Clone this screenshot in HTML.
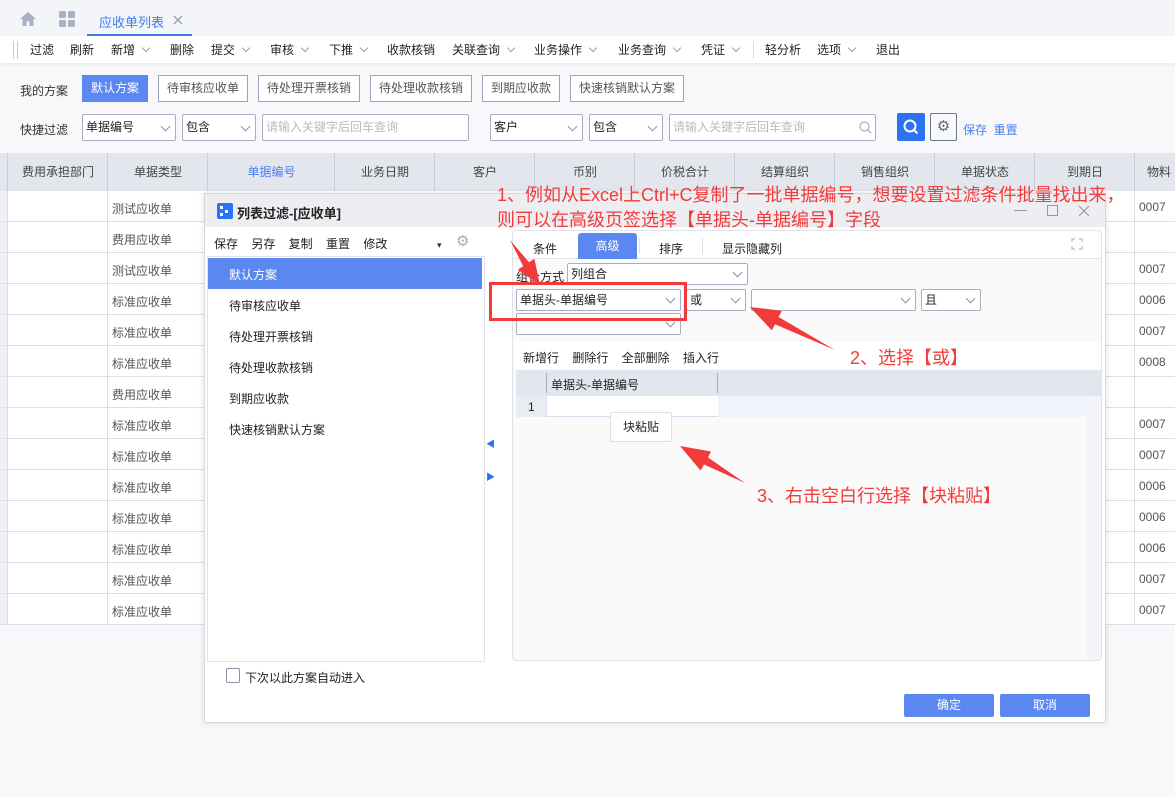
<!DOCTYPE html>
<html><head><meta charset="utf-8"><style>
*{margin:0;padding:0;box-sizing:border-box}
body{width:1175px;height:797px;position:relative;overflow:hidden;background:#f8f8fa;font-family:"Liberation Sans","Noto Sans CJK SC",sans-serif;font-size:12px;color:#222}
.a{position:absolute;white-space:nowrap}
.tb{position:absolute;top:41px;font-size:12px;color:#222;white-space:nowrap}
.tb i{display:inline-block;width:6px;height:6px;border-right:1px solid #9aa2b4;border-bottom:1px solid #9aa2b4;transform:rotate(45deg);margin-left:8px;position:relative;top:-3px}
.btn{position:absolute;top:75px;height:27px;border:1px solid #9aa5bd;background:#fff;color:#555;font-size:12px;line-height:25px;text-align:center}
.sel{position:absolute;height:27px;border:1px solid #a7b0c2;background:#fff;border-radius:2px;font-size:12px;line-height:25px;padding-left:3px}
.chev{position:absolute;right:6px;top:8px;width:7px;height:7px;border-right:1px solid #8a93a6;border-bottom:1px solid #8a93a6;transform:rotate(45deg)}
.s2{position:absolute;height:22px;border:1px solid #a7b0c2;background:#fff;border-radius:2px;font-size:12px;line-height:20px;padding-left:3px}
.s2 .chev{top:5px}
.hd{position:absolute;top:153px;height:38px;line-height:38px;text-align:center;color:#444;font-size:12px;border-left:1px solid #c9cdd6}
.red{color:#f43b3b;font-size:18px}
</style></head><body>
<!-- top tabs -->
<div class="a" style="left:0;top:0;width:1175px;height:36px;background:#f4f5f8"></div>
<svg class="a" style="left:19px;top:11px" width="18" height="16" viewBox="0 0 18 16"><path d="M9 1 L1 8 H3.5 V15 H7.5 V10.5 H10.5 V15 H14.5 V8 H17 Z" fill="#a9b1c2"/></svg>
<svg class="a" style="left:59px;top:11px" width="16" height="16"><rect x="0" y="0" width="7" height="7" rx="1.5" fill="#a9b1c2"/><rect x="9" y="0" width="7" height="7" rx="1.5" fill="#a9b1c2"/><rect x="0" y="9" width="7" height="7" rx="1.5" fill="#a9b1c2"/><rect x="9" y="9" width="7" height="7" rx="1.5" fill="#a9b1c2"/></svg>
<div class="a" style="left:99px;top:12px;font-size:13px;color:#3d7bf4">应收单列表</div>
<svg class="a" style="left:173px;top:15px" width="10" height="10"><path d="M1 1L9 9M9 1L1 9" stroke="#9aa0ad" stroke-width="1.4"/></svg>
<div class="a" style="left:87px;top:34px;width:105px;height:2px;background:#3d7bf4"></div>
<!-- toolbar -->
<div class="a" style="left:0;top:36px;width:1175px;height:27px;background:#fff;box-shadow:0 2px 3px rgba(0,0,0,.06)"></div>
<div class="a" style="left:13px;top:41px;width:1px;height:18px;background:#c5cad6"></div>
<div class="a" style="left:17px;top:41px;width:1px;height:18px;background:#c5cad6"></div>
<div class="tb" style="left:30px">过滤</div>
<div class="tb" style="left:70px">刷新</div>
<div class="tb" style="left:111px">新增<i></i></div>
<div class="tb" style="left:170px">删除</div>
<div class="tb" style="left:211px">提交<i></i></div>
<div class="tb" style="left:270px">审核<i></i></div>
<div class="tb" style="left:329px">下推<i></i></div>
<div class="tb" style="left:387px">收款核销</div>
<div class="tb" style="left:452px">关联查询<i></i></div>
<div class="tb" style="left:534px">业务操作<i></i></div>
<div class="tb" style="left:618px">业务查询<i></i></div>
<div class="tb" style="left:701px">凭证<i></i></div>
<div class="a" style="left:753px;top:41px;width:1px;height:18px;background:#d5d9e2"></div>
<div class="tb" style="left:765px">轻分析</div>
<div class="tb" style="left:817px">选项<i></i></div>
<div class="tb" style="left:876px">退出</div>
<!-- scheme -->
<div class="a" style="left:20px;top:82px;color:#333">我的方案</div>
<div class="btn" style="left:82px;width:66px;background:#5b88f0;border-color:#5b88f0;color:#fff">默认方案</div>
<div class="btn" style="left:158px;width:90px">待审核应收单</div>
<div class="btn" style="left:258px;width:102px">待处理开票核销</div>
<div class="btn" style="left:370px;width:102px">待处理收款核销</div>
<div class="btn" style="left:482px;width:78px">到期应收款</div>
<div class="btn" style="left:570px;width:114px">快速核销默认方案</div>
<div class="a" style="left:20px;top:121px;color:#333">快捷过滤</div>
<div class="sel" style="left:82px;top:114px;width:94px">单据编号<i class="chev"></i></div>
<div class="sel" style="left:182px;top:114px;width:74px">包含<i class="chev"></i></div>
<div class="sel" style="left:262px;top:114px;width:207px;color:#bbb">请输入关键字后回车查询</div>
<div class="sel" style="left:490px;top:114px;width:93px">客户<i class="chev"></i></div>
<div class="sel" style="left:589px;top:114px;width:74px">包含<i class="chev"></i></div>
<div class="sel" style="left:669px;top:114px;width:207px;color:#bbb">请输入关键字后回车查询</div>
<svg class="a" style="left:859px;top:121px" width="13" height="13"><circle cx="5.5" cy="5.5" r="4.5" stroke="#999" fill="none"/><line x1="9" y1="9" x2="12" y2="12" stroke="#999"/></svg>
<div class="a" style="left:897px;top:113px;width:28px;height:28px;background:#2b72f4;border-radius:2px"></div>
<svg class="a" style="left:903px;top:119px" width="16" height="16"><circle cx="7" cy="7" r="5.5" stroke="#fff" stroke-width="2" fill="none"/><line x1="11" y1="11" x2="14.5" y2="14.5" stroke="#fff" stroke-width="2"/></svg>
<div class="a" style="left:930px;top:113px;width:27px;height:28px;border:1px solid #6b7590;border-radius:2px;text-align:center;line-height:26px;font-size:15px;color:#667">⚙</div>
<div class="a" style="left:963px;top:121px;color:#4a7ff0">保存&nbsp;&nbsp;重置</div>
<!-- grid header -->
<div class="a" style="left:0;top:153px;width:1175px;height:38px;background:#e3e6ed"></div>
<div class="hd" style="left:7px;width:101px">费用承担部门</div>
<div class="hd" style="left:107px;width:101px">单据类型</div>
<div class="hd" style="left:207px;width:128px;color:#4a7ff0">单据编号</div>
<div class="hd" style="left:334px;width:101px">业务日期</div>
<div class="hd" style="left:434px;width:101px">客户</div>
<div class="hd" style="left:534px;width:101px">币别</div>
<div class="hd" style="left:634px;width:101px">价税合计</div>
<div class="hd" style="left:734px;width:101px">结算组织</div>
<div class="hd" style="left:834px;width:101px">销售组织</div>
<div class="hd" style="left:934px;width:101px">单据状态</div>
<div class="hd" style="left:1034px;width:101px">到期日</div>
<div class="hd" style="left:1134px;width:60px;text-align:left;padding-left:12px">物料</div>
<!-- rows -->
<div class="a" style="left:0;top:191px;width:8px;height:434px;background:#eef0f5"></div>
<div class="a" style="left:8px;top:191px;width:1167px;height:434px;background:#fff"></div>
<div id="rows"></div>
<script>
var t=["测试应收单","费用应收单","测试应收单","标准应收单","标准应收单","标准应收单","费用应收单","标准应收单","标准应收单","标准应收单","标准应收单","标准应收单","标准应收单","标准应收单"];
var v=["0007","","0007","0006","0007","0008","","0007","0007","0006","0006","0006","0007","0007"];
var h="";
for(var i=0;i<14;i++){var y=191+i*31;
h+='<div class="a" style="left:0;top:'+(y+30)+'px;width:1175px;height:1px;background:#dcdfe6"></div>';
h+='<div class="a" style="left:112px;top:'+(y+9)+'px;color:#555">'+t[i]+'</div>';
h+='<div class="a" style="left:1139px;top:'+(y+9)+'px;color:#555">'+v[i]+'</div>';}
h+='<div class="a" style="left:7px;top:191px;width:1px;height:434px;background:#dcdfe6"></div><div class="a" style="left:107px;top:191px;width:1px;height:434px;background:#dcdfe6"></div><div class="a" style="left:1134px;top:191px;width:1px;height:434px;background:#dcdfe6"></div>';
document.getElementById("rows").innerHTML=h;
</script>
<!-- dialog -->
<div class="a" style="left:204px;top:193px;width:902px;height:530px;background:#fff;border:1px solid #d5d8df;box-shadow:0 0 6px rgba(0,0,0,.12)"></div>
<div class="a" style="left:205px;top:194px;width:900px;height:33px;background:#edeef2"></div>
<div class="a" style="left:217px;top:203px;width:16px;height:16px;background:#2b72f4;border-radius:2px"></div>
<div class="a" style="left:220px;top:206px;width:3px;height:3px;background:#fff"></div><div class="a" style="left:225px;top:210px;width:3px;height:3px;background:#fff"></div><div class="a" style="left:220px;top:213px;width:3px;height:3px;background:#fff"></div>
<div class="a" style="left:237px;top:203px;font-size:13px;font-weight:bold;color:#222">列表过滤-[应收单]</div>
<div class="a" style="left:1014px;top:210px;width:13px;height:1px;background:#999"></div>
<div class="a" style="left:1047px;top:205px;width:11px;height:11px;border:1px solid #999"></div>
<svg class="a" style="left:1078px;top:205px" width="12" height="12"><path d="M1 1L11 11M11 1L1 11" stroke="#999" stroke-width="1.2"/></svg>
<!-- left panel -->
<div class="a" style="left:214px;top:235px;color:#222">保存&nbsp;&nbsp;&nbsp;&nbsp;另存&nbsp;&nbsp;&nbsp;&nbsp;复制&nbsp;&nbsp;&nbsp;&nbsp;重置&nbsp;&nbsp;&nbsp;&nbsp;修改</div>
<div class="a" style="left:437px;top:240px;font-size:9px;color:#333">▾</div>
<div class="a" style="left:456px;top:232px;font-size:15px;color:#aab">⚙</div>
<div class="a" style="left:207px;top:256px;width:278px;height:406px;border:1px solid #dfe2e8;background:#fff"></div>
<div class="a" style="left:208px;top:258px;width:274px;height:31px;background:#5b88f0"></div>
<div class="a" style="left:229px;top:266px;color:#fff">默认方案</div>
<div class="a" style="left:229px;top:297px">待审核应收单</div>
<div class="a" style="left:229px;top:328px">待处理开票核销</div>
<div class="a" style="left:229px;top:359px">待处理收款核销</div>
<div class="a" style="left:229px;top:390px">到期应收款</div>
<div class="a" style="left:229px;top:421px">快速核销默认方案</div>
<div class="a" style="left:486px;top:437px;font-size:9px;color:#2b72f4">◀</div>
<div class="a" style="left:486px;top:470px;font-size:9px;color:#2b72f4">▶</div>
<div class="a" style="left:226px;top:668px;width:14px;height:15px;border:1px solid #8a93a6;border-radius:2px"></div>
<div class="a" style="left:245px;top:669px">下次以此方案自动进入</div>
<div class="a" style="left:904px;top:694px;width:90px;height:23px;background:#5b88f0;color:#fff;text-align:center;line-height:23px;border-radius:2px">确定</div>
<div class="a" style="left:1000px;top:694px;width:90px;height:23px;background:#5b88f0;color:#fff;text-align:center;line-height:23px;border-radius:2px">取消</div>
<!-- right panel -->
<div class="a" style="left:512px;top:230px;width:590px;height:431px;border:1px solid #dfe2e8;border-radius:4px;background:#fafafa"></div>
<div class="a" style="left:513px;top:231px;width:588px;height:28px;background:#fff;border-bottom:1px solid #e3e5ea;border-radius:4px 4px 0 0"></div>
<div class="a" style="left:533px;top:240px">条件</div>
<div class="a" style="left:578px;top:233px;width:59px;height:26px;background:#5b88f0;border-radius:3px 3px 0 0;color:#fff;text-align:center;line-height:26px">高级</div>
<div class="a" style="left:639px;top:238px;width:1px;height:16px;background:#dde"></div>
<div class="a" style="left:659px;top:240px">排序</div>
<div class="a" style="left:702px;top:238px;width:1px;height:16px;background:#dde"></div>
<div class="a" style="left:722px;top:240px">显示隐藏列</div>
<svg class="a" style="left:1071px;top:238px" width="12" height="12"><path d="M1 4V1H4M8 1H11V4M11 8V11H8M4 11H1V8" stroke="#aab" fill="none"/></svg>
<div class="a" style="left:516px;top:268px">组合方式</div>
<div class="s2" style="left:567px;top:263px;width:181px">列组合<i class="chev"></i></div>
<div class="s2" style="left:516px;top:289px;width:165px">单据头-单据编号<i class="chev"></i></div>
<div class="s2" style="left:686px;top:289px;width:60px">或<i class="chev"></i></div>
<div class="s2" style="left:751px;top:289px;width:165px"><i class="chev"></i></div>
<div class="s2" style="left:921px;top:289px;width:60px">且<i class="chev"></i></div>
<div class="s2" style="left:516px;top:313px;width:165px"><i class="chev"></i></div>
<div class="a" style="left:515px;top:342px;width:586px;height:27px;background:#fff"></div>
<div class="a" style="left:523px;top:349px">新增行&nbsp;&nbsp;&nbsp;&nbsp;删除行&nbsp;&nbsp;&nbsp;&nbsp;全部删除&nbsp;&nbsp;&nbsp;&nbsp;插入行</div>
<div class="a" style="left:516px;top:370px;width:585px;height:26px;background:#e2e6ee"></div>
<div class="a" style="left:546px;top:373px;width:1px;height:20px;background:#aab"></div>
<div class="a" style="left:717px;top:373px;width:1px;height:20px;background:#aab"></div>
<div class="a" style="left:551px;top:376px">单据头-单据编号</div>
<div class="a" style="left:516px;top:396px;width:570px;height:21px;background:#fff;border-bottom:1px solid #dde"></div>
<div class="a" style="left:718px;top:396px;width:368px;height:21px;background:#eef3fd"></div>
<div class="a" style="left:516px;top:396px;width:30px;height:21px;background:#e9ecf2"></div>
<div class="a" style="left:528px;top:400px">1</div>
<div class="a" style="left:546px;top:396px;width:1px;height:21px;background:#dde"></div>
<div class="a" style="left:1086px;top:396px;width:15px;height:264px;background:#f3f5fa"></div>
<div class="a" style="left:610px;top:412px;width:62px;height:30px;background:#fff;border:1px solid #dcdfe6;border-radius:2px;text-align:center;line-height:28px">块粘贴</div>
<!-- annotations -->
<div class="a" style="left:489px;top:282px;width:198px;height:39px;border:3px solid #f23a3a"></div>
<div class="a red" style="left:497px;top:181px">1、例如从Excel上Ctrl+C复制了一批单据编号，想要设置过滤条件批量找出来，</div>
<div class="a red" style="left:497px;top:206px">则可以在高级页签选择【单据头-单据编号】字段</div>
<div class="a red" style="left:850px;top:344px">2、选择【或】</div>
<div class="a red" style="left:757px;top:482px">3、右击空白行选择【块粘贴】</div>
<svg class="a" style="left:0;top:0" width="1175" height="797">
<polygon points="540,285 534.4,258.7 529,262.3 510,240 523.2,266.1 517.8,269.7" fill="#f23a3a"/>
<polygon points="750,307 781.8,310.8 778.6,317 835,350 775,324.2 771.8,330.4" fill="#f23a3a"/>
<polygon points="680,446 711,451.5 708,457.5 745,483 704,464.5 700.6,470.5" fill="#f23a3a"/>
</svg>
</body></html>
